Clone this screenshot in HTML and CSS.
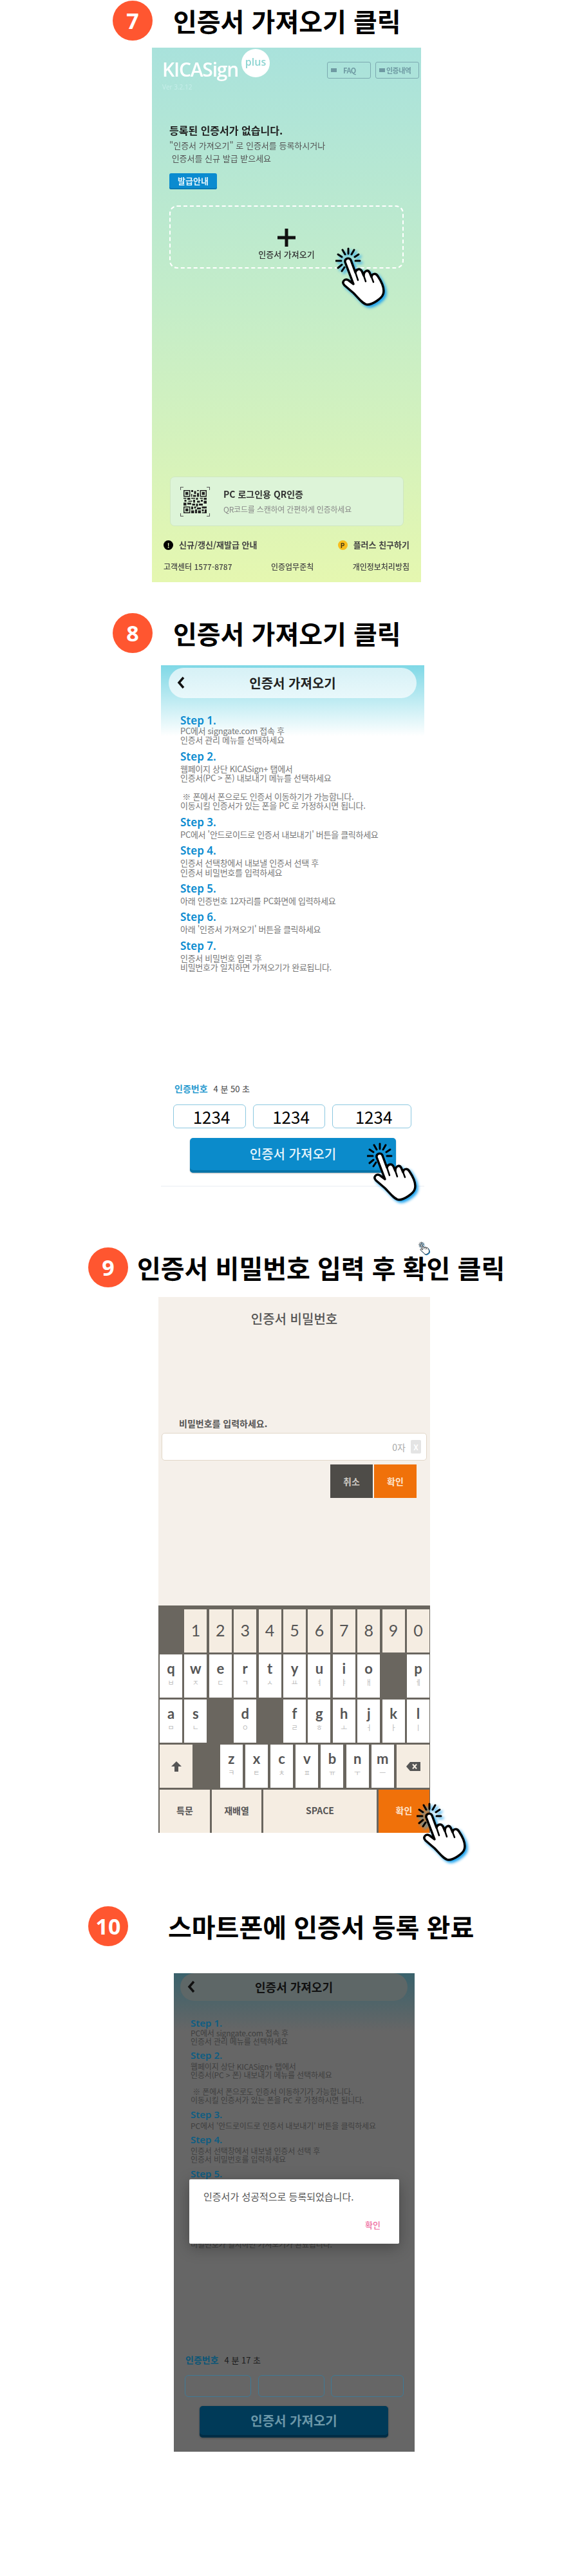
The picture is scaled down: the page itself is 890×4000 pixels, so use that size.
FILE: index.html
```html
<!DOCTYPE html>
<html lang="ko">
<head>
  <meta charset="UTF-8" />
  <title>KICASign 인증서 가져오기</title>
  <link rel="stylesheet" href="styles.css">
</head>
<body>
  <svg class="defs" width="0" height="0">
    <symbol id="hand" viewBox="0 0 80 100">
      <path class="hand-body" d="M15 24C14 18 22 16 24 21L31 40C32 35 38 33 41 38L44 45C44 38 50 35 53 40L56 47C57 41 63 41 66 46C72 55 77 66 74 74C72 80 58 90 50 90C43 90 36 80 28 72L14 60C9 55 14 49 20 52L28 58Z"/>
      <path class="hand-line" d="M31 40L35 52M44 45L47 54M56 47L59 55"/>
      <path class="hand-rays" d="M20 11V3M25 12L29 5M30 16L36 12M31 22H38M15 12L11 5M10 16L4 12M9 22H1M10 28L4 33M14 32L10 38"/>
    </symbol>
  </svg>

  <!-- 7 -->
  <div class="head head-7">
    <div class="num">7</div>
    <h2>인증서 가져오기 클릭</h2>
  </div>
  <div class="phone phone-main">
    <div class="main-top">
      <div class="logo-box">
        <div class="logo">KICASign</div>
        <div class="ver">Ver 3.2.12</div>
        <div class="logo-plus">plus</div>
      </div>
      <div class="top-btns">
        <div class="top-btn"><i></i>FAQ</div>
        <div class="top-btn"><i></i>인증내역</div>
      </div>
    </div>
    <div class="empty-title">등록된 인증서가 없습니다.</div>
    <div class="empty-text">"인증서 가져오기" 로 인증서를 등록하시거나<br>&nbsp;인증서를 신규 발급 받으세요</div>
    <div class="issue-btn">발급안내</div>
    <div class="import-box">
      <svg class="plus" width="30" height="30" viewBox="0 0 30 30"><path d="M15 1V29M1 15H29"/></svg>
      <div>인증서 가져오기</div>
    </div>
    <div class="qr-card">
      <svg class="qr" width="48" height="50" viewBox="0 0 32 32">
        <path class="qr-corner" d="M1 4V1H4M28 1H31V4M1 28V31H4M28 31H31V28"/>
        <path d="M4 4h7v7h-7zM5 5v5h5v-5zM6 6h3v3h-3zM21 4h7v7h-7zM22 5v5h5v-5zM23 6h3v3h-3zM4 21h7v7h-7zM5 22v5h5v-5zM6 23h3v3h-3z" fill-rule="evenodd"/>
        <path d="M12 4h2v2h-2zM15 5h2v3h-2zM18 4h2v1h-2zM12 8h1v3h-1zM14 9h3v2h-3zM18 7h2v4h-2zM4 12h3v1h-3zM8 12h3v2h-3zM12 12h4v1h-4zM17 12h2v2h-2zM21 12h3v1h-3zM25 12h3v2h-3zM5 14h2v2h-2zM9 15h4v1h-4zM14 14h2v3h-2zM18 15h3v2h-3zM22 14h2v2h-2zM25 15h3v3h-3zM4 17h3v3h-3zM8 17h4v2h-4zM13 18h3v2h-3zM17 18h2v3h-2zM20 18h4v2h-4zM12 21h2v3h-2zM15 21h2v2h-2zM18 22h4v2h-4zM23 21h5v2h-5zM12 25h3v3h-3zM16 24h2v4h-2zM19 25h3v3h-3zM23 24h2v2h-2zM26 24h2v4h-2zM23 27h3v1h-3z"/>
      </svg>
      <div>
        <div class="qr-title">PC 로그인용 QR인증</div>
        <div class="qr-sub">QR코드를 스캔하여 간편하게 인증하세요</div>
      </div>
    </div>
    <div class="links">
      <div class="link"><span class="ico ico-info">!</span>신규/갱신/재발급 안내</div>
      <div class="link"><span class="ico ico-plus">P</span>플러스 친구하기</div>
    </div>
    <div class="foot">
      <span>고객센터 1577-8787</span>
      <span>인증업무준칙</span>
      <span>개인정보처리방침</span>
    </div>
    <svg class="hand hand-7"><use href="#hand"/></svg>
  </div>

  <!-- 8 -->
  <div class="head head-8">
    <div class="num">8</div>
    <h2>인증서 가져오기 클릭</h2>
  </div>
  <div class="phone phone-import">
    <div class="pill">
      <svg class="back" width="14" height="22" viewBox="0 0 14 22"><path d="M11 3L4 11L11 19"/></svg>
      <span>인증서 가져오기</span>
    </div>
    <div class="steps">
      <div class="step-name">Step 1.</div>
      <p class="step-text first">PC에서 signgate.com 접속 후<br>인증서 관리 메뉴를 선택하세요</p>
      <div class="step-name">Step 2.</div>
      <p class="step-text">웹페이지 상단 KICASign+ 탭에서<br>인증서(PC &gt; 폰) 내보내기 메뉴를 선택하세요<br><br>&nbsp;※ 폰에서 폰으로도 인증서 이동하기가 가능합니다.<br>이동시킬 인증서가 있는 폰을 PC 로 가정하시면 됩니다.</p>
      <div class="step-name">Step 3.</div>
      <p class="step-text">PC에서 '안드로이드로 인증서 내보내기' 버튼을 클릭하세요</p>
      <div class="step-name">Step 4.</div>
      <p class="step-text">인증서 선택창에서 내보낼 인증서 선택 후<br>인증서 비밀번호를 입력하세요</p>
      <div class="step-name">Step 5.</div>
      <p class="step-text">아래 인증번호 12자리를 PC화면에 입력하세요</p>
      <div class="step-name">Step 6.</div>
      <p class="step-text">아래 '인증서 가져오기' 버튼을 클릭하세요</p>
      <div class="step-name">Step 7.</div>
      <p class="step-text">인증서 비밀번호 입력 후<br>비밀번호가 일치하면 가져오기가 완료됩니다.</p>
    </div>
    <div class="code-area">
      <div class="code-label"><b>인증번호</b>4 분 50 초</div>
      <div class="code-inputs">
        <div class="code-input">1234</div>
        <div class="code-input">1234</div>
        <div class="code-input">1234</div>
      </div>
      <div class="import-btn">인증서 가져오기</div>
    </div>
    <svg class="hand hand-8"><use href="#hand"/></svg>
  </div>

  <!-- 9 -->
  <div class="head head-9">
    <div class="num">9</div>
    <h2>인증서 비밀번호 입력 후 확인 클릭</h2>
    <svg class="hand hand-tiny"><use href="#hand"/></svg>
  </div>
  <div class="phone phone-pass">
    <div class="pass-title">인증서 비밀번호</div>
    <div class="pass-label">비밀번호를 입력하세요.</div>
    <div class="pass-input"><span>0자</span><i>X</i></div>
    <div class="pass-btns">
      <div class="pass-btn cancel">취소</div>
      <div class="pass-btn ok">확인</div>
    </div>
    <div class="keyboard">
      <div class="kb-row">
        <div></div>
        <div class="key soft num-key">1</div><div class="key soft num-key">2</div><div class="key soft num-key">3</div><div class="key soft num-key">4</div><div class="key soft num-key">5</div><div class="key soft num-key">6</div><div class="key soft num-key">7</div><div class="key soft num-key">8</div><div class="key soft num-key">9</div><div class="key soft num-key">0</div>
      </div>
      <div class="kb-row">
        <div class="key">q<small>ㅂ</small></div><div class="key">w<small>ㅈ</small></div><div class="key">e<small>ㄷ</small></div><div class="key">r<small>ㄱ</small></div><div class="key">t<small>ㅅ</small></div><div class="key">y<small>ㅛ</small></div><div class="key">u<small>ㅕ</small></div><div class="key">i<small>ㅑ</small></div><div class="key">o<small>ㅐ</small></div>
        <div></div>
        <div class="key">p<small>ㅔ</small></div>
      </div>
      <div class="kb-row">
        <div class="key">a<small>ㅁ</small></div><div class="key">s<small>ㄴ</small></div>
        <div></div>
        <div class="key">d<small>ㅇ</small></div>
        <div></div>
        <div class="key">f<small>ㄹ</small></div><div class="key">g<small>ㅎ</small></div><div class="key">h<small>ㅗ</small></div><div class="key">j<small>ㅓ</small></div><div class="key">k<small>ㅏ</small></div><div class="key">l<small>ㅣ</small></div>
      </div>
      <div class="kb-row kb-row-4">
        <div class="key soft icon-key"><svg width="18" height="18" viewBox="0 0 18 18"><path d="M9 1L17 9H12V17H6V9H1Z"/></svg></div>
        <div></div>
        <div class="key">z<small>ㅋ</small></div><div class="key">x<small>ㅌ</small></div><div class="key">c<small>ㅊ</small></div><div class="key">v<small>ㅍ</small></div><div class="key">b<small>ㅠ</small></div><div class="key">n<small>ㅜ</small></div><div class="key">m<small>ㅡ</small></div>
        <div class="key soft icon-key"><svg width="24" height="16" viewBox="0 0 24 16"><path d="M7 1H23V15H7L1 8Z"/><path class="del-x" d="M11 4.500L17 11.500M17 4.500L11 11.500"/></svg></div>
      </div>
      <div class="kb-row kb-row-5">
        <div class="key soft text-key">특문</div>
        <div class="key soft text-key">재배열</div>
        <div class="key soft text-key">SPACE</div>
        <div class="key text-key key-ok">확인</div>
      </div>
    </div>
    <svg class="hand hand-9"><use href="#hand"/></svg>
  </div>

  <!-- 10 -->
  <div class="head head-10">
    <div class="num">10</div>
    <h2>스마트폰에 인증서 등록 완료</h2>
  </div>
  <div class="phone phone-import phone-done">
    <div class="pill">
      <svg class="back" width="14" height="22" viewBox="0 0 14 22"><path d="M11 3L4 11L11 19"/></svg>
      <span>인증서 가져오기</span>
    </div>
    <div class="steps">
      <div class="step-name">Step 1.</div>
      <p class="step-text first">PC에서 signgate.com 접속 후<br>인증서 관리 메뉴를 선택하세요</p>
      <div class="step-name">Step 2.</div>
      <p class="step-text">웹페이지 상단 KICASign+ 탭에서<br>인증서(PC &gt; 폰) 내보내기 메뉴를 선택하세요<br><br>&nbsp;※ 폰에서 폰으로도 인증서 이동하기가 가능합니다.<br>이동시킬 인증서가 있는 폰을 PC 로 가정하시면 됩니다.</p>
      <div class="step-name">Step 3.</div>
      <p class="step-text">PC에서 '안드로이드로 인증서 내보내기' 버튼을 클릭하세요</p>
      <div class="step-name">Step 4.</div>
      <p class="step-text">인증서 선택창에서 내보낼 인증서 선택 후<br>인증서 비밀번호를 입력하세요</p>
      <div class="step-name">Step 5.</div>
      <p class="step-text">아래 인증번호 12자리를 PC화면에 입력하세요</p>
      <div class="step-name">Step 6.</div>
      <p class="step-text">아래 '인증서 가져오기' 버튼을 클릭하세요</p>
      <div class="step-name">Step 7.</div>
      <p class="step-text">인증서 비밀번호 입력 후<br>비밀번호가 일치하면 가져오기가 완료됩니다.</p>
    </div>
    <div class="code-area">
      <div class="code-label"><b>인증번호</b>4 분 17 초</div>
      <div class="code-inputs">
        <div class="code-input"></div>
        <div class="code-input"></div>
        <div class="code-input"></div>
      </div>
      <div class="import-btn">인증서 가져오기</div>
    </div>
    <div class="modal">
      <div class="modal-text">인증서가 성공적으로 등록되었습니다.</div>
      <div class="modal-ok">확인</div>
    </div>
  </div>
</body>
</html>
```

FILE: styles.css
```css
* { box-sizing: border-box; }
body {
  margin: 0;
  padding-top: 1px;
  background: #fff;
  color: #000;
  font-family: "Noto Sans CJK KR", "Noto Sans", sans-serif;
}

.defs { position: absolute; }

/* section heads */
.head {
  position: relative;
  display: flex;
  align-items: center;
  height: 62px;
}
.head h2 {
  margin: 0;
  font-size: 40px;
  font-weight: 700;
  line-height: 62px;
  white-space: nowrap;
}
.num {
  flex: none;
  width: 62px;
  height: 62px;
  border-radius: 50%;
  background: #ff5630;
  color: #fff;
  font-family: "Open Sans", sans-serif;
  font-size: 34px;
  font-weight: 700;
  line-height: 62px;
  text-align: center;
}
.head-7 { margin-left: 175px; gap: 32px; }
.head-8 { margin: 48px 0 0 175px; gap: 32px; }
.head-9 { margin: 94px 0 0 137px; gap: 14px; }
.head-10 { margin: 114px 0 0 137px; gap: 62px; }

.phone { position: relative; display: flex; flex-direction: column; }

.hand {
  position: absolute;
  width: 80px;
  height: 100px;
  overflow: visible;
  filter: drop-shadow(3px 3px 2px #1ea3ee);
}
.hand-body { fill: #fff; stroke: #000; stroke-width: 3.5; stroke-linejoin: round; }
.hand-line { fill: none; stroke: #000; stroke-width: 2.500; stroke-linecap: round; }
.hand-rays { fill: none; stroke: #000; stroke-width: 3; stroke-linecap: round; }
.hand-7 { left: 285px; top: 309px; }
.hand-8 { left: 320px; top: 740px; }
.hand-9 { left: 401px; top: 784px; }
.hand-tiny { left: 513px; top: -9px; width: 18px; height: 22px; filter: drop-shadow(1px 1px 0 #1c86c8); }

/* 7 main screen, the source capture is soft so its content gets a small blur */
.phone-main {
  width: 418px;
  height: 830px;
  margin: 11px 0 0 236px;
  background: linear-gradient(#a9e2dc, #c5edc8 49%, #e5f7b0);
}
.phone-main > :not(.hand) { filter: blur(0.5px); }
.main-top {
  display: flex;
  justify-content: space-between;
  height: 117px;
  padding: 22px 3px 0 16px;
}
.logo-box { position: relative; }
.logo {
  margin-top: -7px;
  color: #fff;
  font-family: "Open Sans", sans-serif;
  font-size: 30px;
  font-weight: 600;
  line-height: 38px;
  letter-spacing: -1.2px;
}
.ver { margin-top: 1px; color: #c6eeea; font-family: "Open Sans", sans-serif; font-size: 10px; line-height: 14px; }
.logo-plus {
  position: absolute;
  left: 123px;
  top: -20px;
  width: 44px;
  height: 44px;
  border-radius: 50%;
  background: #fff;
  color: #8ed5d2;
  font-family: "Open Sans", sans-serif;
  font-size: 16px;
  font-weight: 600;
  line-height: 40px;
  text-align: center;
}
.top-btns { display: flex; gap: 7px; }
.top-btn {
  display: flex;
  align-items: center;
  width: 68px;
  height: 26px;
  padding-left: 5px;
  border: 1.5px solid #7ca9b0;
  border-radius: 3px;
  color: #6f9aa3;
  font-size: 11px;
  font-weight: 700;
  letter-spacing: -0.5px;
}
.top-btn i { width: 9px; height: 6px; margin-right: 2px; background: #6f9aa3; }
.top-btn:first-child i { margin-right: 10px; }

.empty-title { margin-left: 27px; font-size: 16px; font-weight: 700; line-height: 22px; color: #222; }
.empty-text { margin: 3px 0 0 27px; font-size: 13px; line-height: 20px; color: #555; }
.issue-btn {
  width: 74px;
  height: 25px;
  margin: 13px 0 0 27px;
  border-radius: 3px;
  background: #0b8bd0;
  box-shadow: inset 0 -2px 0 #0a78b4;
  color: #e6f5fb;
  font-size: 13px;
  font-weight: 700;
  line-height: 23px;
  text-align: center;
}
.import-box {
  display: flex;
  flex-direction: column;
  align-items: center;
  width: 364px;
  height: 98px;
  margin: 25px 0 0 27px;
  padding-top: 33px;
  border: 2px dashed #fff;
  border-radius: 12px;
  color: #333;
  font-size: 13px;
  font-weight: 500;
  line-height: 20px;
}
.plus { fill: none; stroke: #111; stroke-width: 5; margin-bottom: 1px; }

.qr-card {
  display: flex;
  align-items: center;
  gap: 20px;
  width: 363px;
  height: 77px;
  margin: auto 0 0 28px;
  padding-left: 14px;
  border: 1px solid #cfe6c2;
  border-radius: 7px;
  background: #ddf4d8;
}
.qr-corner { fill: none; stroke: #555; stroke-width: 0.700; }
.qr { flex: none; fill: #222; }
.qr-title { font-size: 14px; font-weight: 700; line-height: 24px; color: #333; }
.qr-sub { font-size: 12px; line-height: 24px; color: #888; letter-spacing: -0.2px; }

.links {
  display: flex;
  justify-content: space-between;
  margin-top: 19px;
  padding: 0 18px;
}
.link { display: flex; align-items: center; gap: 9px; font-size: 13px; font-weight: 700; line-height: 20px; color: #444; }
.ico {
  width: 15px;
  height: 15px;
  border-radius: 50%;
  font-size: 10px;
  line-height: 15px;
  text-align: center;
}
.ico-info { background: #000; color: #e4f5b8; }
.ico-plus { background: #f7bd1c; color: #4a3a12; }
.foot {
  display: flex;
  justify-content: space-between;
  margin-top: 14px;
  padding: 0 18px 14px;
  font-size: 12px;
  font-weight: 500;
  line-height: 20px;
  color: #444;
}

/* 8 import screen */
.phone-import {
  width: 409px;
  height: 810px;
  margin: 19px 0 0 250px;
  background: linear-gradient(#7fd8e6, #fff 110px);
  border-bottom: 2px solid #f3f5f8;
}
.pill {
  position: relative;
  flex: none;
  height: 47px;
  margin: 4px 12px 0;
  border-radius: 24px;
  background: linear-gradient(#d6f1f6, #e9f8fb);
  color: #222;
  font-size: 20px;
  font-weight: 700;
  line-height: 47px;
  text-align: center;
}
.back {
  position: absolute;
  left: 12px;
  top: 12px;
  fill: none;
  stroke: #111;
  stroke-width: 3.5;
}
.steps { margin-top: 17px; padding-left: 30px; }
.step-name {
  margin-top: 7px;
  color: #0b8bd0;
  font-family: "Noto Sans", sans-serif;
  font-size: 17px;
  font-weight: 600;
  line-height: 22px;
}
.step-text {
  margin: 1px 0 0;
  color: #777;
  font-size: 13px;
  line-height: 14.4px;
  letter-spacing: -0.3px;
}
.step-text.first { margin-top: -2px; }

.code-area { margin-top: auto; padding-bottom: 20px; }
.code-label { margin-left: 21px; font-size: 13px; line-height: 20px; color: #444; }
.code-label b { margin-right: 9px; color: #2a9bd0; font-size: 14px; font-weight: 700; }
.code-inputs {
  display: grid;
  grid-template-columns: 113px 112px 123px;
  gap: 11px;
  margin: 14px 0 0 19px;
}
.code-input {
  height: 37px;
  border: 1px solid #8cc8e0;
  border-radius: 6px;
  padding-left: 6px;
  font-size: 26px;
  line-height: 35px;
  text-align: center;
}
.import-btn {
  width: 320px;
  height: 54px;
  margin: 15px 0 0 45px;
  border-radius: 5px;
  background: #0b8bcb;
  box-shadow: inset 0 -4px 0 #0874a8, 0 1px 2px rgba(0,0,0,0.3);
  color: #e8f6fc;
  font-size: 20px;
  font-weight: 500;
  line-height: 50px;
  text-align: center;
}

/* 9 password screen */
.phone-pass {
  width: 422px;
  height: 832px;
  margin: 15px 0 0 246px;
  background: #f5f0ea;
}
.pass-title { margin-top: 20px; font-size: 20px; font-weight: 500; line-height: 28px; text-align: center; color: #555; }
.pass-label { margin: 138px 0 0 32px; font-size: 14px; font-weight: 700; line-height: 20px; color: #555; }
.pass-input {
  display: flex;
  align-items: center;
  justify-content: flex-end;
  gap: 8px;
  height: 43px;
  margin: 5px 5px 0;
  padding-right: 8px;
  border: 1px solid #e2d7c8;
  border-radius: 5px;
  background: #fff;
  color: #aaa;
  font-size: 14px;
}
.pass-input i {
  width: 16px;
  height: 21px;
  border-radius: 2px;
  background: #e4e4e4;
  color: #fff;
  font-size: 12px;
  font-style: normal;
  font-weight: 700;
  line-height: 21px;
  text-align: center;
}
.pass-btns { display: flex; justify-content: flex-end; gap: 2px; margin: 6px 21px 0 0; }
.pass-btn {
  width: 66px;
  height: 52px;
  font-size: 14px;
  font-weight: 700;
  line-height: 52px;
  text-align: center;
}
.pass-btn.cancel { background: #4e4c48; color: #cfcbc4; }
.pass-btn.ok { background: #f0710a; color: #fde3cd; }

.keyboard {
  display: flex;
  flex-direction: column;
  gap: 3px;
  height: 353px;
  margin-top: auto;
  padding: 6px 1px 0 2px;
  background: #6a665f;
}
.kb-row {
  display: grid;
  grid-template-columns: repeat(11, 1fr);
  column-gap: 3.4px;
  height: 67px;
}
.kb-row-4 { grid-template-columns: 51px 1fr repeat(7, 35px) 51px; column-gap: 4.2px; }
.kb-row-5 { grid-template-columns: 78px 77px 1fr 79px; column-gap: 3px; }
.key {
  display: flex;
  flex-direction: column;
  align-items: center;
  padding-top: 9px;
  background: #fff;
  color: #555;
  font-family: Lato, sans-serif;
  font-size: 22px;
  font-weight: 700;
  line-height: 26px;
}
.key small {
  margin-top: 1px;
  color: #bbb;
  font-family: "Noto Sans CJK KR", sans-serif;
  font-size: 11px;
  font-weight: 400;
  line-height: 14px;
}
.soft { background: #f5ede2; }
.num-key { padding-top: 19px; font-size: 25px; font-weight: 400; }
.icon-key { justify-content: center; padding-top: 0; fill: #555; }
.del-x { fill: none; stroke: #f5ede2; stroke-width: 2; }
.text-key {
  justify-content: center;
  padding: 0 0 4px;
  font-family: "Noto Sans CJK KR", sans-serif;
  font-size: 14px;
  font-weight: 700;
}
.key-ok { background: #f0710a; color: #fde3cd; }

/* 10 done screen, same page behind a dim layer */
.phone-done {
  width: 374px;
  height: 743px;
  margin: 42px 0 0 270px;
  background: linear-gradient(#3a626c, #666 90px);
  border-bottom: 0;
}
.phone-done .pill { height: 43px; margin: 0 11px 0 10px; background: #5e6767; color: #111; font-size: 18px; line-height: 43px; }
.phone-done .back { left: 10px; top: 10px; }
.phone-done .steps { margin-top: 18px; padding-left: 26px; }
.phone-done .step-name { margin-top: 5.500px; color: #0e5d82; font-size: 15px; line-height: 20px; }
.phone-done .step-text { color: #3f3f3f; font-size: 12px; line-height: 13px; letter-spacing: -0.15px; }
.phone-done .step-text.first { margin-top: -1px; }
.phone-done .code-area { padding-bottom: 22px; }
.phone-done .code-label { margin-left: 18px; color: #1c1c1c; }
.phone-done .code-label b { color: #0c5677; }
.phone-done .code-inputs { grid-template-columns: 103px 103px 113px; gap: 10.500px; margin: 13px 0 0 17px; }
.phone-done .code-input { height: 34px; border-color: #3f7a96; }
.phone-done .import-btn {
  width: 293px;
  height: 49px;
  margin: 14px 0 0 40px;
  background: #003a58;
  box-shadow: inset 0 -4px 0 #002d45, 0 1px 3px rgba(0,0,0,0.3);
  color: #6b97a8;
  font-weight: 700;
  line-height: 46px;
}
.modal {
  position: absolute;
  left: 24px;
  top: 320px;
  width: 326px;
  height: 100px;
  border-radius: 2px;
  background: #fff;
  box-shadow: 0 6px 24px rgba(0,0,0,0.3);
}
.modal-text { padding: 16px 0 0 22px; font-size: 15px; line-height: 22px; color: #555; }
.modal-ok { position: absolute; right: 29px; top: 60px; font-size: 13px; font-weight: 500; line-height: 22px; color: #ee6ca0; }
```
